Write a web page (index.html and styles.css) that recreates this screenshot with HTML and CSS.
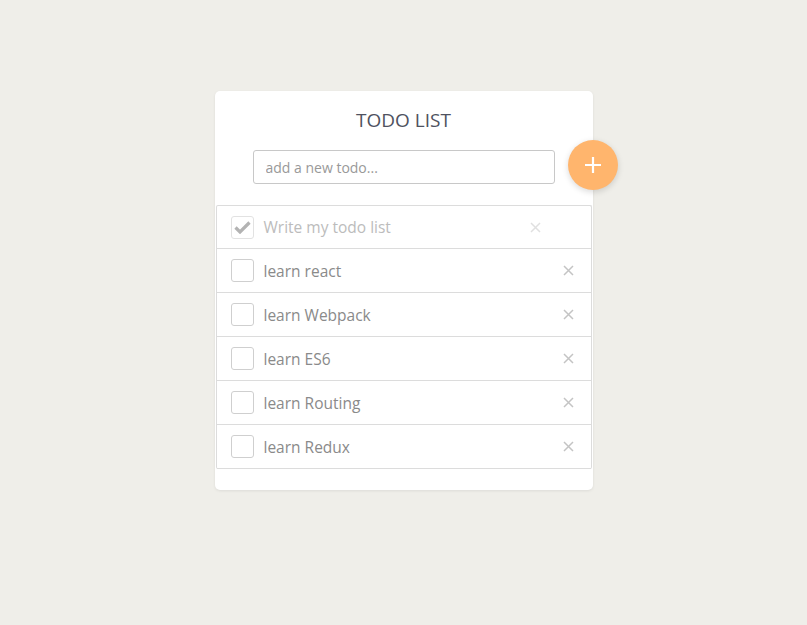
FILE: index.html
```html
<!DOCTYPE html>
<html>
<head>
<meta charset="utf-8">
<link rel="stylesheet" href="styles.css">
</head>
<body>
<div class="card">
  <h1 class="title">TODO LIST</h1>
  <div class="new-row">
    <input class="new-input" type="text" placeholder="add a new todo...">
  </div>
  <button class="add-btn" aria-label="add">
    <svg width="18" height="18" viewBox="0 0 18 18"><path d="M9 1v16M1 9h16" stroke="#fff" stroke-width="2.2" fill="none"/></svg>
  </button>
  <ul class="list">
    <li class="item done">
      <span class="box"><svg width="17" height="14" viewBox="0 0 17 14"><path d="M1.5 7.5l4.5 4.5L15.5 2.5" stroke="#b3b3b3" stroke-width="3.2" fill="none" stroke-linejoin="miter"/></svg></span>
      <span class="text">Write my todo list</span>
      <span class="del del-done"><svg width="11" height="11" viewBox="0 0 11 11"><path d="M1 1l9 9M10 1l-9 9" stroke="#e0e0e0" stroke-width="1.5"/></svg></span>
    </li>
    <li class="item"><span class="box"></span><span class="text">learn react</span><span class="del"><svg width="11" height="11" viewBox="0 0 11 11"><path d="M1 1l9 9M10 1l-9 9" stroke="#c4c4c4" stroke-width="1.5"/></svg></span></li>
    <li class="item"><span class="box"></span><span class="text">learn Webpack</span><span class="del"><svg width="11" height="11" viewBox="0 0 11 11"><path d="M1 1l9 9M10 1l-9 9" stroke="#c4c4c4" stroke-width="1.5"/></svg></span></li>
    <li class="item"><span class="box"></span><span class="text">learn ES6</span><span class="del"><svg width="11" height="11" viewBox="0 0 11 11"><path d="M1 1l9 9M10 1l-9 9" stroke="#c4c4c4" stroke-width="1.5"/></svg></span></li>
    <li class="item"><span class="box"></span><span class="text">learn Routing</span><span class="del"><svg width="11" height="11" viewBox="0 0 11 11"><path d="M1 1l9 9M10 1l-9 9" stroke="#c4c4c4" stroke-width="1.5"/></svg></span></li>
    <li class="item"><span class="box"></span><span class="text">learn Redux</span><span class="del"><svg width="11" height="11" viewBox="0 0 11 11"><path d="M1 1l9 9M10 1l-9 9" stroke="#c4c4c4" stroke-width="1.5"/></svg></span></li>
  </ul>
</div>
</body>
</html>
```
FILE: styles.css
```css
* { box-sizing: border-box; }
html, body { margin: 0; padding: 0; }
body {
  background: #efeee9;
  font-family: "Open Sans", "Lato", sans-serif;
  height: 625px;
}
.card {
  position: relative;
  width: 378px;
  margin: 91px auto 0;
  background: #fff;
  border-radius: 5px;
  box-shadow: 0 1px 3px rgba(0,0,0,0.08);
  padding: 0 0 21px;
}
.title {
  margin: 0;
  padding: 16px 0 0;
  height: 59px;
  text-align: center;
  font-weight: 400;
  font-size: 19px;
  color: #4f5260;
  letter-spacing: 0;
}
.new-row {
  display: flex;
  justify-content: center;
  height: 55px;
}
.new-input {
  width: 302px;
  height: 34px;
  border: 1px solid #c8c8c8;
  border-radius: 3px;
  padding: 0 12px;
  font-family: inherit;
  font-size: 14px;
  color: #555;
  outline: none;
}
.new-input::placeholder { color: #999; }
.add-btn {
  position: absolute;
  left: 353px;
  top: 49px;
  width: 50px;
  height: 50px;
  border-radius: 50%;
  border: none;
  background: #ffb56d;
  box-shadow: 0 2px 6px rgba(0,0,0,0.15);
  display: flex;
  align-items: center;
  justify-content: center;
  padding: 0;
}
.list {
  list-style: none;
  margin: 0 1px;
  padding: 0;
  border: 1px solid #dcdcdc;
  border-bottom: none;
  border-radius: 2px;
}
.item {
  display: flex;
  align-items: center;
  height: 44px;
  border-bottom: 1px solid #dcdcdc;
  padding: 0 0 0 14px;
}
.item:first-child { height: 43px; }
.box {
  width: 23px;
  height: 23px;
  border: 1px solid #cfcfcf;
  border-radius: 3px;
  display: flex;
  align-items: center;
  justify-content: center;
  flex: none;
}
.text {
  margin-left: 10px;
  font-size: 15.5px;
  color: #8a8a8a;
  flex: 1;
}
.done .box { border-color: #e2e2e2; }
.done .text { color: #bcbcbc; }
.del {
  display: flex;
  width: 11px;
  height: 11px;
  margin-right: 17px;
}
.del-done { margin-right: 50px; }
```
